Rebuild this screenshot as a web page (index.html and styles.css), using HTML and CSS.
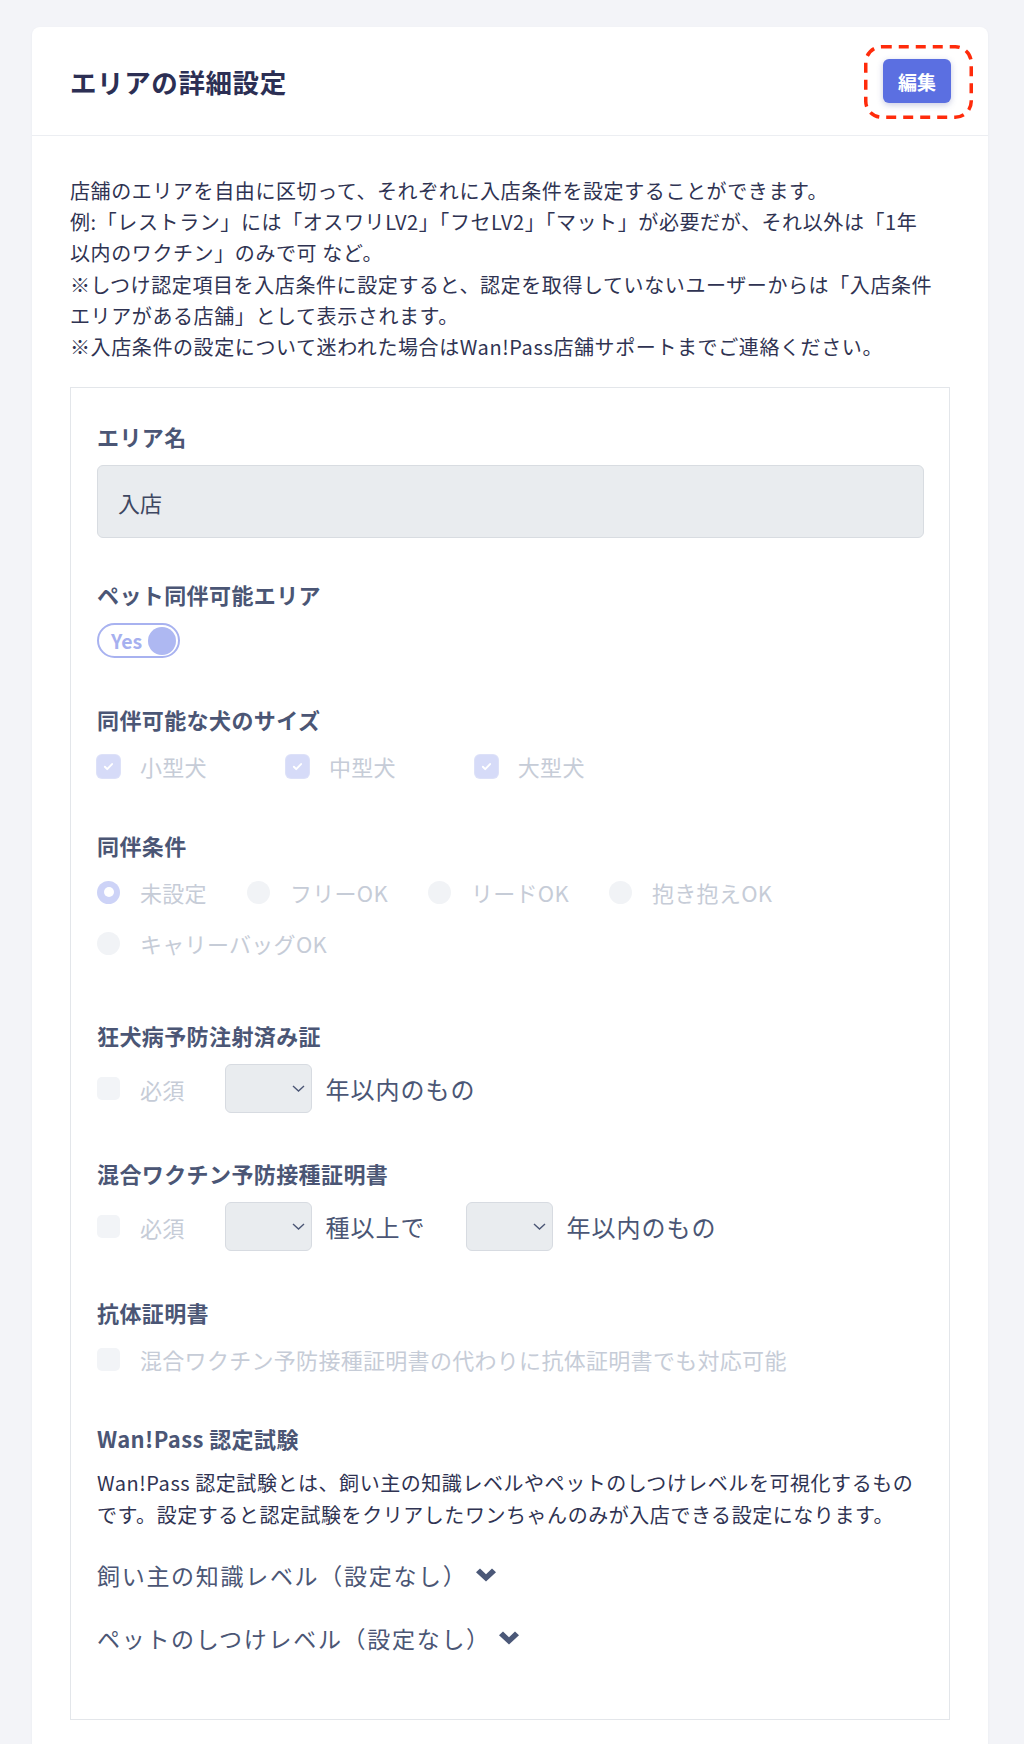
FILE: index.html
```html
<!DOCTYPE html>
<html lang="ja">
<head>
<meta charset="utf-8">
<title>エリアの詳細設定</title>
<link rel="stylesheet" href="styles.css">
</head>
<body>
<div class="page">
  <div class="card">
    <div class="card-header">
      <h2 class="title">エリアの詳細設定</h2>
      <div class="highlight">
        <button class="edit-btn">編集</button>
        <svg class="dash" viewBox="0 0 109 74" width="109" height="74"><rect x="1.75" y="1.75" width="105.5" height="70.5" rx="16" ry="16" fill="none" stroke="#ff2b0b" stroke-width="3.5" stroke-dasharray="10 7"/></svg>
      </div>
    </div>
    <div class="card-body">
      <p class="desc">店舗のエリアを自由に区切って、それぞれに入店条件を設定することができます。<br>例:「レストラン」には「オスワリLV2」「フセLV2」「マット」が必要だが、それ以外は「1年<br>以内のワクチン」のみで可 など。<br>※しつけ認定項目を入店条件に設定すると、認定を取得していないユーザーからは「入店条件<br>エリアがある店舗」として表示されます。<br>※入店条件の設定について迷われた場合はWan!Pass店舗サポートまでご連絡ください。</p>

      <div class="area-box">
        <div class="field">
          <div class="label">エリア名</div>
          <div class="input">入店</div>
        </div>

        <div class="field f-pet">
          <div class="label">ペット同伴可能エリア</div>
          <div class="toggle"><span class="toggle-text">Yes</span><span class="knob"></span></div>
        </div>

        <div class="field">
          <div class="label">同伴可能な犬のサイズ</div>
          <div class="opt-row sizes">
            <div class="opt"><span class="cb checked"><svg viewBox="0 0 16 16" width="13" height="13"><path d="M3.5 8.3l2.9 2.9 6-6.2" fill="none" stroke="#fff" stroke-width="2.4" stroke-linecap="round" stroke-linejoin="round"/></svg></span><span class="opt-text">小型犬</span></div>
            <div class="opt"><span class="cb checked"><svg viewBox="0 0 16 16" width="13" height="13"><path d="M3.5 8.3l2.9 2.9 6-6.2" fill="none" stroke="#fff" stroke-width="2.4" stroke-linecap="round" stroke-linejoin="round"/></svg></span><span class="opt-text">中型犬</span></div>
            <div class="opt"><span class="cb checked"><svg viewBox="0 0 16 16" width="13" height="13"><path d="M3.5 8.3l2.9 2.9 6-6.2" fill="none" stroke="#fff" stroke-width="2.4" stroke-linecap="round" stroke-linejoin="round"/></svg></span><span class="opt-text">大型犬</span></div>
          </div>
        </div>

        <div class="field">
          <div class="label">同伴条件</div>
          <div class="opt-row radios">
            <div class="opt"><span class="radio checked"></span><span class="opt-text">未設定</span></div>
            <div class="opt"><span class="radio"></span><span class="opt-text">フリーOK</span></div>
            <div class="opt"><span class="radio"></span><span class="opt-text">リードOK</span></div>
            <div class="opt"><span class="radio"></span><span class="opt-text">抱き抱えOK</span></div>
            <div class="opt"><span class="radio"></span><span class="opt-text">キャリーバッグOK</span></div>
          </div>
        </div>

        <div class="field f-rabies">
          <div class="label">狂犬病予防注射済み証</div>
          <div class="sel-row">
            <div class="opt"><span class="cb"></span><span class="opt-text">必須</span></div>
            <div class="select"><svg viewBox="0 0 13 7" width="13" height="7"><path d="M1 1l5.5 5 5.5-5" fill="none" stroke="#4b5675" stroke-width="1.4"/></svg></div>
            <span class="sel-text">年以内のもの</span>
          </div>
        </div>

        <div class="field f-mixed">
          <div class="label">混合ワクチン予防接種証明書</div>
          <div class="sel-row">
            <div class="opt"><span class="cb"></span><span class="opt-text">必須</span></div>
            <div class="select"><svg viewBox="0 0 13 7" width="13" height="7"><path d="M1 1l5.5 5 5.5-5" fill="none" stroke="#4b5675" stroke-width="1.4"/></svg></div>
            <span class="sel-text">種以上で</span>
            <div class="select"><svg viewBox="0 0 13 7" width="13" height="7"><path d="M1 1l5.5 5 5.5-5" fill="none" stroke="#4b5675" stroke-width="1.4"/></svg></div>
            <span class="sel-text">年以内のもの</span>
          </div>
        </div>

        <div class="field">
          <div class="label">抗体証明書</div>
          <div class="opt-row">
            <div class="opt"><span class="cb"></span><span class="opt-text">混合ワクチン予防接種証明書の代わりに抗体証明書でも対応可能</span></div>
          </div>
        </div>

        <div class="field">
          <div class="label">Wan!Pass 認定試験</div>
          <p class="note">Wan!Pass 認定試験とは、飼い主の知識レベルやペットのしつけレベルを可視化するもの<br>です。設定すると認定試験をクリアしたワンちゃんのみが入店できる設定になります。</p>
          <div class="level first"><span>飼い主の知識レベル（設定なし）</span><svg class="chev" viewBox="0 0 20 14" width="20" height="14"><path d="M0 4.2L4 0.4 10 6.3 16 0.4 20 4.2 10 13.6Z" fill="#4b5878"/></svg></div>
          <div class="level"><span>ペットのしつけレベル（設定なし）</span><svg class="chev" viewBox="0 0 20 14" width="20" height="14"><path d="M0 4.2L4 0.4 10 6.3 16 0.4 20 4.2 10 13.6Z" fill="#4b5878"/></svg></div>
        </div>
      </div>
    </div>
  </div>
</div>
</body>
</html>
```
FILE: styles.css
```css
* { box-sizing: border-box; }

body {
  margin: 0;
  background: #f3f4f8;
  font-family: "Noto Sans CJK JP", "Noto Sans", sans-serif;
  color: #2f3352;
}

.page {
  padding: 27px 36px 0 32px;
}

.card {
  background: #fff;
  border-radius: 8px 8px 0 0;
  box-shadow: 0 1px 3px rgba(40, 50, 90, 0.05);
  padding-bottom: 60px;
}

.card-header {
  display: flex;
  justify-content: space-between;
  align-items: center;
  padding: 18px 15px 16px 38px;
  border-bottom: 1px solid #eceef2;
}

.title {
  margin: 0;
  font-size: 26.5px;
  font-weight: 700;
  letter-spacing: 0.6px;
  line-height: 34px;
  color: #2c2f54;
}

.highlight {
  position: relative;
  width: 109px;
  height: 74px;
  padding: 14px 22px 16px 19px;
}

.dash {
  position: absolute;
  left: 0;
  top: 0;
  pointer-events: none;
}

.edit-btn {
  display: block;
  width: 68px;
  height: 44px;
  border: 0;
  border-radius: 6px;
  background: #5b6fe1;
  color: #fff;
  font-family: "Noto Sans CJK JP", sans-serif;
  font-size: 19px;
  font-weight: 700;
  letter-spacing: 0;
  box-shadow: 0 2px 6px rgba(60, 70, 150, 0.28);
}

.card-body {
  padding: 39px 38px 0 38px;
}

.desc {
  margin: 0 0 25px;
  font-size: 20px;
  letter-spacing: 0.6px;
  line-height: 31.2px;
  color: #2f3352;
}

.area-box {
  border: 1px solid #e3e6ea;
  padding: 33px 25px 65px 26px;
}

.field + .field { margin-top: 46px; }
.field.f-pet { margin-top: 41px; }
.field.f-rabies { margin-top: 59px; }
.field.f-mixed { margin-top: 45px; }

.label {
  font-size: 22px;
  font-weight: 700;
  letter-spacing: 0.4px;
  line-height: 30px;
  color: #4b5675;
  margin-bottom: 14px;
}

.input {
  height: 73px;
  display: flex;
  align-items: center;
  padding-left: 20px;
  background: #e9ecef;
  border: 1px solid #d8dce1;
  border-radius: 6px;
  font-size: 22px;
  color: #3e4761;
}

.toggle {
  width: 83px;
  height: 35px;
  border: 2px solid #a8b2f0;
  border-radius: 18px;
  display: flex;
  align-items: center;
  justify-content: space-between;
  padding: 0 2px 0 12px;
}

.toggle-text {
  font-size: 19.5px;
  font-weight: 700;
  color: #a6b0ef;
  line-height: 1;
}

.knob {
  width: 28px;
  height: 28px;
  border-radius: 50%;
  background: #aeb8f2;
}

.opt-row {
  display: flex;
  flex-wrap: wrap;
}

.opt-row.sizes { column-gap: 79px; }
.opt-row.radios { column-gap: 40px; row-gap: 15px; }

.opt {
  display: flex;
  align-items: center;
  gap: 20px;
  height: 36px;
}

.opt-text {
  font-size: 22px;
  letter-spacing: 0.3px;
  color: #c6ccd7;
  line-height: 30px;
}

.cb {
  width: 23px;
  height: 23px;
  border-radius: 5px;
  background: #f2f4f7;
  display: flex;
  align-items: center;
  justify-content: center;
  flex: none;
}

.cb.checked {
  background: #d6dbf8;
  box-shadow: 0 0 0 1px #dde1f8;
}

.radio {
  width: 23px;
  height: 23px;
  border-radius: 50%;
  background: #f1f3f6;
  flex: none;
  display: flex;
  align-items: center;
  justify-content: center;
}

.radio.checked {
  background: #cdd3f7;
}

.radio.checked::after {
  content: "";
  width: 10px;
  height: 10px;
  border-radius: 50%;
  background: #fff;
}

.sel-row {
  display: flex;
  align-items: center;
  height: 49px;
}

.sel-row .opt { margin-right: 40px; }

.select {
  width: 87px;
  height: 49px;
  background: #e9ecef;
  border: 1px solid #d7dbe1;
  border-radius: 6px;
  display: flex;
  align-items: center;
  justify-content: flex-end;
  padding-right: 6px;
  margin-right: 14px;
}

.sel-text {
  font-size: 24px;
  letter-spacing: 1px;
  color: #4b5675;
  line-height: 30px;
}

.sel-text + .select { margin-left: 40px; }

.note {
  margin: 0;
  font-size: 20px;
  letter-spacing: 0.55px;
  line-height: 32px;
  color: #2f3352;
}

.level {
  display: flex;
  align-items: center;
  gap: 8px;
  font-size: 23px;
  letter-spacing: 1.7px;
  line-height: 32px;
  color: #4b5675;
  margin-top: 31px;
}

.level.first { margin-top: 28px; }

.chev { flex: none; }
```
